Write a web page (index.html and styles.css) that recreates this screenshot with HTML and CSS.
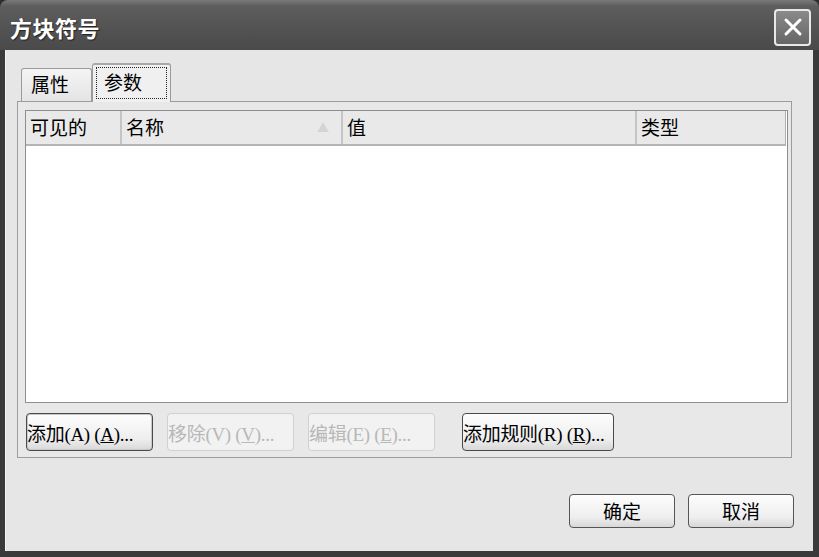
FILE: index.html
```html
<!DOCTYPE html>
<html lang="zh">
<head>
<meta charset="utf-8">
<title>方块符号</title>
<link rel="stylesheet" href="styles.css">
</head>
<body>
<div class="window">
  <div class="titlebar">
    <span class="title">方块符号</span>
    <div class="close">
      <svg width="22" height="22" viewBox="0 0 22 22"><path d="M4 4 L18 18 M18 4 L4 18" stroke="#fff" stroke-width="3" stroke-linecap="round"/></svg>
    </div>
  </div>
  <div class="client">
    <div class="tabs">
      <div class="tab">属性</div>
      <div class="tab active"><span class="focus">参数</span></div>
    </div>
    <div class="panel">
      <div class="list">
        <div class="header">
          <div class="col c1">可见的</div>
          <div class="col c2">名称<span class="sort">▲</span></div>
          <div class="col c3">值</div>
          <div class="col c4">类型</div>
        </div>
        <div class="rows"></div>
      </div>
      <div class="btnrow">
        <button class="btn b-add">添加(A) (<u>A</u>)...</button>
        <button class="btn dis">移除(V) (<u>V</u>)...</button>
        <button class="btn dis">编辑(E) (<u>E</u>)...</button>
        <button class="btn b-rule">添加规则(R) (<u>R</u>)...</button>
      </div>
    </div>
    <div class="okrow">
      <button class="btn ok">确定</button>
      <button class="btn ok">取消</button>
    </div>
  </div>
</div>
</body>
</html>
```

FILE: styles.css
```css
html, body {
  margin: 0;
  padding: 0;
}
body {
  width: 819px;
  height: 557px;
  overflow: hidden;
  background: #2e2e2e;
  font-family: "Noto Sans CJK SC", sans-serif;
}
.window {
  width: 819px;
  height: 557px;
  display: flex;
  flex-direction: column;
  background: #3a3a3a;
  border-radius: 8px 8px 0 0;
  overflow: hidden;
}
.titlebar {
  height: 50px;
  flex: none;
  display: flex;
  align-items: center;
  justify-content: space-between;
  background: linear-gradient(#7a7a7a 0px, #5e5e5e 6px, #525252 30px, #4a4a4a 50px);
  padding: 0 8px 0 10px;
}
.title {
  color: #fff;
  font-size: 22px;
  font-weight: 700;
  letter-spacing: 0.5px;
  text-shadow: 1px 1px 1px #222;
  margin-top: 3px;
}
.close {
  width: 33px;
  height: 33px;
  border: 2px solid #e8e8e8;
  border-radius: 4px;
  background: linear-gradient(#8a8a8a, #666);
  display: flex;
  align-items: center;
  justify-content: center;
  margin-top: 4px;
}
.client {
  flex: 1;
  background: #e6e6e6;
  margin: 0 6px 6px 5px;
  border-left: 1px solid #f4f4f4;
  padding: 13px 0 0 11px;
  display: flex;
  flex-direction: column;
}
.tabs {
  display: flex;
  align-items: flex-end;
  height: 38px;
  padding-left: 4px;
  position: relative;
  z-index: 1;
}
.tab {
  height: 33px;
  width: 71px;
  box-sizing: border-box;
  border: 1px solid #9a9a9a;
  border-bottom: none;
  border-radius: 3px 3px 0 0;
  background: linear-gradient(#f4f4f4, #e4e4e4);
  font-size: 19px;
  color: #000;
  padding: 2px 0 0 9px;
  line-height: 26px;
}
.tab.active {
  width: 79px;
  height: 39px;
  background: #f0f0f0;
  border-top: 2px solid #a8a8a8;
  padding: 2px 3px 0 3px;
  margin-bottom: -1px;
}
.focus {
  display: block;
  border: 1px dotted #222;
  padding: 0 0 0 7px;
  line-height: 28px;
  height: 32px;
  box-sizing: border-box;
}
.panel {
  width: 775px;
  height: 357px;
  box-sizing: border-box;
  border: 1px solid #9c9c9c;
  background: #e8e8e8;
  padding: 8px 3px 0 7px;
}
.list {
  width: 763px;
  height: 293px;
  box-sizing: border-box;
  border: 1px solid #8e8e8e;
  background: #fff;
  display: flex;
  flex-direction: column;
}
.header {
  height: 35px;
  flex: none;
  display: flex;
  background: #e9e9e9;
  border-bottom: 2px solid #b4b4b4;
  box-sizing: border-box;
  margin-right: 1px;
  border-right: 1px solid #b0b0b0;
}
.col {
  font-size: 19px;
  color: #000;
  line-height: 32px;
  padding-left: 4px;
  box-sizing: border-box;
  border-right: 2px solid #c4c4c4;
  position: relative;
}
.c1 { width: 96px; }
.c2 { width: 221px; }
.c3 { width: 294px; }
.c4 { flex: 1; border-right: none; }
.sort {
  position: absolute;
  right: 12px;
  top: 1px;
  font-size: 12px;
  color: #d4d4d4;
}
.rows { flex: 1; }
.btnrow {
  display: flex;
  margin-top: 10px;
  padding-left: 1px;
}
.btn {
  height: 38px;
  box-sizing: border-box;
  border: 1px solid #4a4a4a;
  border-radius: 4px;
  background: linear-gradient(#fdfdfd, #eeeeee 70%, #d8d8d8);
  font-family: "Liberation Serif", "Noto Sans CJK SC", serif;
  font-size: 19px;
  color: #000;
  padding: 0;
  margin: 0;
  white-space: nowrap;
  overflow: hidden;
  text-align: left;
  letter-spacing: -0.3px;
}
.btn u { text-decoration: underline; }
.btnrow .btn { width: 127px; margin-right: 14px; }
.btnrow .b-add { box-shadow: inset 0 0 0 1px #c8c8c8; }
.btnrow .dis {
  color: #b8b8b8;
  border-color: #d0d0d0;
  background: #f2f2f2;
}
.btnrow .b-rule { width: 152px; margin-left: 13px; }
.okrow {
  display: flex;
  justify-content: flex-end;
  gap: 13px;
  padding-right: 19px;
  margin-top: 36px;
}
.btn.ok {
  width: 106px;
  height: 34px;
  text-align: center;
  font-family: "Noto Sans CJK SC", sans-serif;
  font-size: 19px;
  line-height: 30px;
  border-color: #555;
  letter-spacing: 0;
}
```
